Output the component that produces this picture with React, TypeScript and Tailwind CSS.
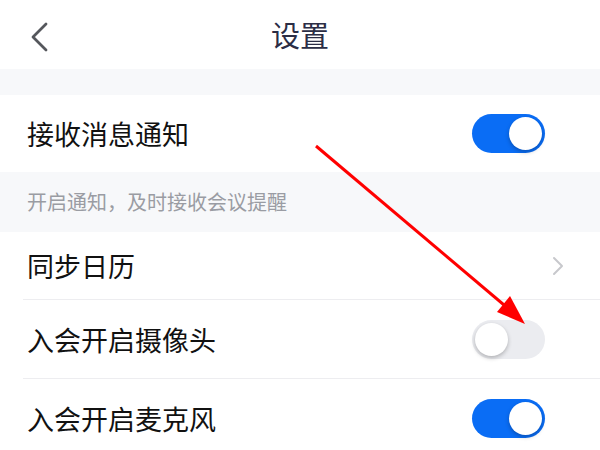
import React from 'react';

function Toggle({ on }: { on: boolean }) {
  return (
    <div
      className={`w-[73px] h-[39px] rounded-full p-[3px] flex items-center ${
        on ? 'bg-[#0a6df5] justify-end' : 'bg-[#ebecf0] justify-start'
      }`}
    >
      <div className="w-[33px] h-[33px] rounded-full bg-white shadow-[0_2px_4px_rgba(0,0,0,0.25)]" />
    </div>
  );
}

export default function App() {
  return (
    <div
      className="relative w-[600px] h-[450px] overflow-hidden bg-white"
      style={{ fontFamily: '"Noto Sans CJK SC", "Noto Sans", sans-serif' }}
    >
      {/* Header */}
      <div className="h-[69px] flex items-center relative">
        <svg className="absolute left-[28px] top-[22px]" width="22" height="30" viewBox="0 0 22 30" fill="none">
          <path d="M18 2 L5 15 L18 28" stroke="#55575c" strokeWidth="2.8" strokeLinecap="round" strokeLinejoin="round" />
        </svg>
        <div className="w-full text-center text-[29px] text-[#2b2d45] leading-none">设置</div>
      </div>
      <div className="h-[26px] bg-[#f7f8fa]" />

      {/* Receive notifications */}
      <div className="h-[77px] flex items-center justify-between pl-[27px] pr-[55px]">
        <span className="text-[27px] text-[#111] leading-none">接收消息通知</span>
        <Toggle on />
      </div>
      <div className="h-[60px] bg-[#f7f8fa] flex items-center pl-[27px]">
        <span className="text-[20px] text-[#9a9ca3] leading-none">开启通知，及时接收会议提醒</span>
      </div>

      {/* Sync calendar */}
      <div className="ml-[23px]">
        <div className="h-[68px] flex items-center justify-between pl-[4px] pr-[36px] border-b border-[#ededf0]">
          <span className="text-[27px] text-[#111] leading-none">同步日历</span>
          <svg width="12" height="20" viewBox="0 0 12 20" fill="none">
            <path d="M2 2 L10 10 L2 18" stroke="#c7c8cc" strokeWidth="2" strokeLinecap="round" strokeLinejoin="round" />
          </svg>
        </div>
        <div className="h-[79px] flex items-center justify-between pl-[4px] pr-[55px] border-b border-[#ededf0]">
          <span className="text-[27px] text-[#111] leading-none">入会开启摄像头</span>
          <Toggle on={false} />
        </div>
        <div className="h-[78px] flex items-center justify-between pl-[4px] pr-[55px]">
          <span className="text-[27px] text-[#111] leading-none">入会开启麦克风</span>
          <Toggle on />
        </div>
      </div>

      {/* Annotation arrow */}
      <svg className="absolute left-0 top-0 pointer-events-none" width="600" height="450" viewBox="0 0 600 450">
        <line x1="316" y1="146" x2="510" y2="310" stroke="#ff0000" strokeWidth="3" />
        <polygon points="525,324 497,312 510,296" fill="#ff0000" />
      </svg>
    </div>
  );
}
